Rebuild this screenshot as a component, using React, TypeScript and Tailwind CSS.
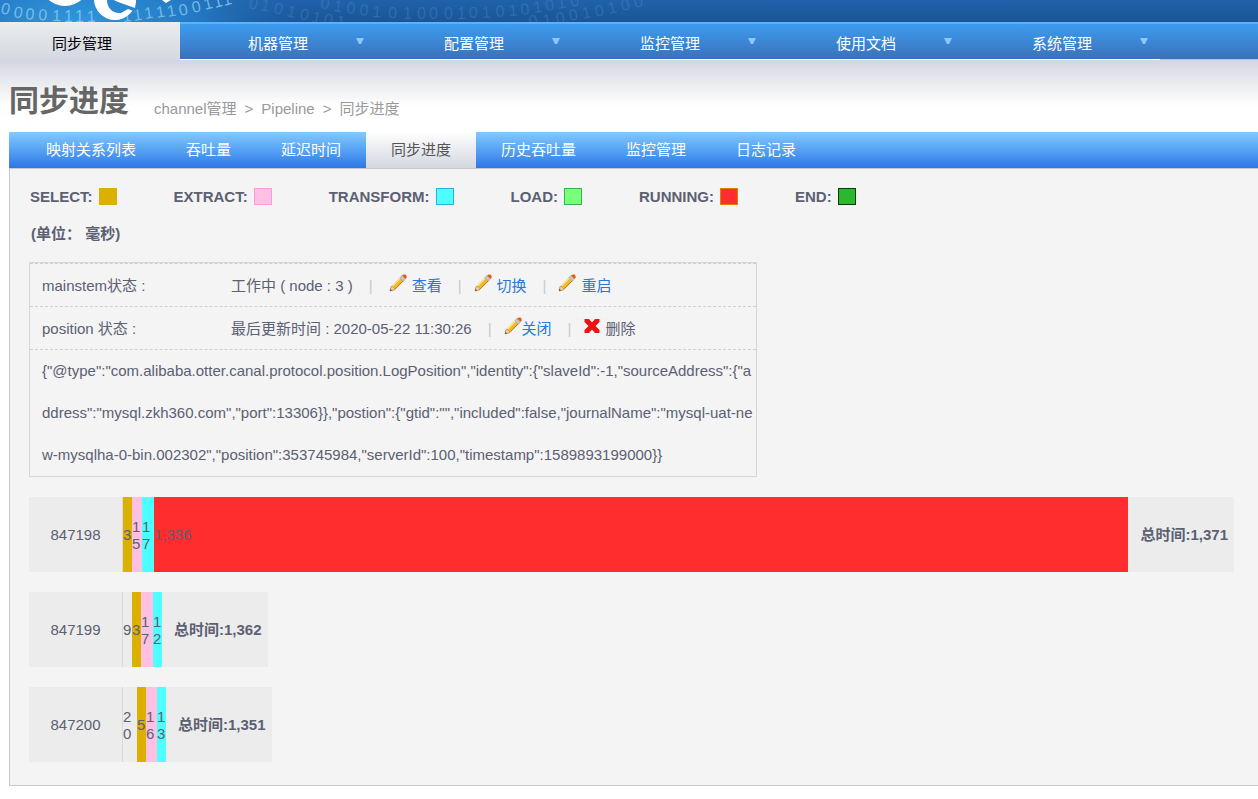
import React from "react"
import clsx from "clsx"

const menus = ["机器管理", "配置管理", "监控管理", "使用文档", "系统管理"]

const tabs = ["映射关系列表", "吞吐量", "延迟时间", "同步进度", "历史吞吐量", "监控管理", "日志记录"]

const legend = [
    { name: "SELECT", color: "bg-[#dbb000] border-[#dbb000]" },
    { name: "EXTRACT", color: "bg-[#ffc0e3] border-[#ff9bdc]" },
    { name: "TRANSFORM", color: "bg-[#4dffff] border-[#2bb1dd]" },
    { name: "LOAD", color: "bg-[#7aff7a] border-[#38b549]" },
    { name: "RUNNING", color: "bg-[#ff2d2d] border-[#e37e00]" },
    { name: "END", color: "bg-[#2ab92e] border-[#083d0a]" },
]

type Stage = { value: string; style: string }

const processes: { id: string; total: string; stages: Stage[] }[] = [
    {
        id: "847198",
        total: "1,371",
        stages: [
            { value: "3", style: "w-[9px] bg-[#dbb000]" },
            { value: "15", style: "w-[10px] bg-[#ffc0e3]" },
            { value: "17", style: "w-[12px] bg-[#4dffff]" },
            { value: "1,336", style: "flex-1 bg-[#ff2d2d]" },
        ],
    },
    {
        id: "847199",
        total: "1,362",
        stages: [
            { value: "9", style: "w-[9px]" },
            { value: "3", style: "w-[9px] bg-[#dbb000]" },
            { value: "17", style: "w-[12px] bg-[#ffc0e3]" },
            { value: "12", style: "w-[9px] bg-[#4dffff]" },
        ],
    },
    {
        id: "847200",
        total: "1,351",
        stages: [
            { value: "20", style: "w-[14px]" },
            { value: "5", style: "w-[9px] bg-[#dbb000]" },
            { value: "16", style: "w-[11px] bg-[#ffc0e3]" },
            { value: "13", style: "w-[9px] bg-[#4dffff]" },
        ],
    },
]

const position = `{"@type":"com.alibaba.otter.canal.protocol.position.LogPosition","identity":{"slaveId":-1,"sourceAddress":{"address":"mysql.zkh360.com","port":13306}},"postion":{"gtid":"","included":false,"journalName":"mysql-uat-new-mysqlha-0-bin.002302","position":353745984,"serverId":100,"timestamp":1589893199000}}`

// decorative banner: streams of binary digits with the bottom of the logo over them
const Banner = () => (
    <div className="h-[22px] overflow-hidden bg-linear-to-b from-[#1f62ab] to-[#1a5596]">
        <svg width="700" height="22" viewBox="0 0 700 22" aria-hidden="true">
            <defs>
                <radialGradient id="glow" gradientUnits="userSpaceOnUse" cx="80" cy="20" r="230" gradientTransform="translate(0 12) scale(1 .4)">
                    <stop offset="0" stopColor="#2e96dc" />
                    <stop offset=".5" stopColor="#2579c4" />
                    <stop offset="1" stopColor="#1f62ab" stopOpacity="0" />
                </radialGradient>
            </defs>
            <rect width="400" height="22" fill="url(#glow)" />
            <g fontFamily="Liberation Sans, sans-serif" fontSize="16">
                <g fill="#8fd0ee" fillOpacity=".75">
                    <text x="0 13 25 38 52 64 75 87" y="13 17 19 20 21 22 22 22" rotate="14 10 6 4 2 0 0 -2">00001111</text>
                    <text x="123 134 145 157 168 180 193 205 215 224" y="22 21 19 18 17 16 13 10 8 6" rotate="-6 -8 -8 -10 -10 -12 -12 -14 -14 -14">1111100111</text>
                </g>
                <g fill="#6fa6dc" fillOpacity=".25">
                    <text x="248 260 273 286 299 311 323 335" y="8 10 13 16 19 22 24 26" rotate="12">01010101</text>
                    <text
                        x="320 333 346 359 372 388 403 417 429 444 457 469 482 496 509 521 534 546 558 571"
                        y="8 11 13 15 17 18 19 19 19 19 19 18 18 17 16 15 13 11 9 7"
                        rotate="8 8 6 6 4 2 0 0 0 0 0 -2 -2 -4 -4 -6 -8 -8 -10 -10"
                    >
                        01001010001010101010
                    </text>
                    <text x="530 544 557 570 583 596 609 622 635" y="27 26 24 21 19 17 14 11 8" rotate="-12">010010100</text>
                </g>
            </g>
            <circle cx="65" cy="-19" r="25" fill="#fff" />
            <circle cx="115" cy="-1" r="21" fill="#fff" />
            <path d="M107 0 C107 8 113 14 121 13 L128 9 L136 12 L138 7 L114 0 Z" fill="#2a87d1" />
            <path d="M114 0 L136 0 L135 8 L118 2 Z" fill="#fff" />
            <path d="M162 0 L171 0 L166 3 Z" fill="#fff" />
        </svg>
    </div>
)

const Pencil = () => (
    <svg width="18" height="18" viewBox="0 0 18 18" className="shrink-0" aria-hidden="true">
        <path d="M1 17 L2 12.5 L12.5 2 L16 5.5 L5.5 16 Z" fill="#f5b91e" />
        <path d="M3 12.5 L12.5 3" stroke="#f7dfa0" strokeWidth="1.6" />
        <path d="M5.5 15.6 L15.4 5.7" stroke="#b9772b" strokeWidth="1" />
        <path d="M1 17 L2 12.5 L3.8 12.6 L5.6 14.4 L5.5 16 Z" fill="#eecba4" stroke="#b98350" strokeWidth=".6" />
        <path d="M1 17 L1.5 14.8 L3.2 16.4 Z" fill="#6b4a35" />
        <path d="M10.8 3.7 L13 1.5 L16.5 5 L14.3 7.2 Z" fill="#bfc9d2" stroke="#929ca6" strokeWidth=".5" />
        <path d="M13 1.5 Q14.5 .2 16.5 .6 Q18 1.5 17.6 3.4 L16.5 5 Z" fill="#ea5b0c" />
    </svg>
)

const Cross = () => (
    <svg width="16" height="16" viewBox="0 0 16 16" className="-mt-1 shrink-0" aria-hidden="true">
        <path d="M.5 1 H5 L8 4.5 L11 1 H15.5 V4 L11.5 8 L15.5 12 V15 H11 L8 11.5 L5 15 H.5 V12 L4.5 8 L.5 4 Z" fill="#ee1111" />
    </svg>
)

const Separator = () => <span className="mr-3 ml-4 text-[#c8c8cc]">|</span>

const Action = ({ label, tight }: { label: string; tight?: boolean }) => (
    <a href="#" className={clsx("flex items-center text-[#2a78d4]", !tight && "gap-[5px]")}>
        <span className="-mt-1 flex"><Pencil /></span>
        {label}
    </a>
)

export default function App() {
    return (
        <div className="min-h-screen overflow-hidden bg-white font-['Liberation_Sans','Noto_Sans_CJK_SC',sans-serif] text-[15px] leading-[17px] text-[#5b6072]">
            <Banner />

            <nav className="flex h-[38px] bg-linear-to-b from-[#3c9ff4] to-[#3a70b8] text-white">
                <a href="#" className="flex w-[180px] items-center bg-linear-to-b from-[#ebedee] to-[#d3d8e2] pt-1 pl-[52px] text-black">
                    同步管理
                </a>
                {menus.map((menu) => (
                    <a key={menu} href="#" className="flex w-[196px] items-center border-t-2 border-b border-t-[#5ab2f8] border-b-white pt-[3px] pl-[68px]">
                        {menu}
                        <svg width="8" height="6" viewBox="0 0 8 6" className="mb-1 ml-12" aria-hidden="true">
                            <path d="M0 0 H8 L5 6 H3 Z" fill="#8cc8fa" />
                        </svg>
                    </a>
                ))}
                <span className="flex-1 border-t-2 border-b border-t-[#5ab2f8] border-b-[#a9c4e4]" />
            </nav>

            <header className="flex h-[72px] items-end bg-linear-to-b from-[#d3d5e1] via-[#e9eaee] via-30% to-white to-65% pb-[14px] pl-[9px]">
                <h1 className="text-[30px] leading-[34px] font-bold text-[#666]">同步进度</h1>
                <div className="mb-px ml-[25px] flex gap-2 text-[#999]">
                    <a href="#">channel管理</a>
                    <span>&gt;</span>
                    <a href="#">Pipeline</a>
                    <span>&gt;</span>
                    <span>同步进度</span>
                </div>
            </header>

            <main className="ml-[9px]">
                <nav className="flex h-9 bg-linear-to-b from-[#82caff] to-[#2d77e6] pl-3 text-white">
                    {tabs.map((tab) => (
                        <a
                            key={tab}
                            href="#"
                            className={clsx("flex items-center px-[25px] pb-[2px]", tab === "同步进度" && "bg-linear-to-b from-white to-[#d3d7df] text-[#555]")}
                        >
                            {tab}
                        </a>
                    ))}
                </nav>

                <section className="border-y border-l border-[#c9c9cc] bg-[#f4f4f4] pt-[19px] pr-6 pb-[23px] pl-[19px]">
                    <ul className="flex gap-[57px] pl-px font-bold">
                        {legend.map((item) => (
                            <li key={item.name} className="flex items-center gap-[6px]">
                                {item.name}:
                                <span className={clsx("h-[17px] w-[18px] border", item.color)} />
                            </li>
                        ))}
                    </ul>
                    <p className="mt-5 pl-[2px] font-bold">(单位： 毫秒)</p>

                    <div className="mt-5 w-[728px] border border-[#d6d6d8]">
                        <div className="flex h-11 items-center border-y border-dashed border-[#cfcfd2] pl-3">
                            <span className="w-[189px]">mainstem状态 :</span>
                            <span>工作中 ( node : 3 )</span>
                            <Separator />
                            <span className="w-1" />
                            <Action label="查看" />
                            <Separator />
                            <Action label="切换" />
                            <Separator />
                            <Action label="重启" />
                        </div>
                        <div className="flex h-[43px] items-center border-b border-dashed border-[#cfcfd2] pl-3">
                            <span className="w-[189px]">position 状态 :</span>
                            <span>最后更新时间 : 2020-05-22 11:30:26</span>
                            <Separator />
                            <Action label="关闭" tight />
                            <Separator />
                            <button type="button" className="flex items-center gap-[6px]">
                                <Cross />
                                删除
                            </button>
                        </div>
                        <p className="pl-3 leading-[42px] break-all">{position}</p>
                    </div>

                    {processes.map((process) => (
                        <div key={process.id} className="mt-5 flex h-[75px]">
                            <div className={clsx("flex bg-[#ececec]", process.id === "847198" && "flex-1")}>
                                <div className="flex w-[94px] items-center justify-center border-r border-[#d9d9d9]">{process.id}</div>
                                {process.stages.map((stage, i) => (
                                    <div key={i} className={clsx("flex items-center break-all", stage.style)}>
                                        {stage.value}
                                    </div>
                                ))}
                                <div className="flex items-center pr-[6px] pl-3 font-bold whitespace-nowrap">总时间:{process.total}</div>
                            </div>
                        </div>
                    ))}
                </section>
            </main>
        </div>
    )
}
